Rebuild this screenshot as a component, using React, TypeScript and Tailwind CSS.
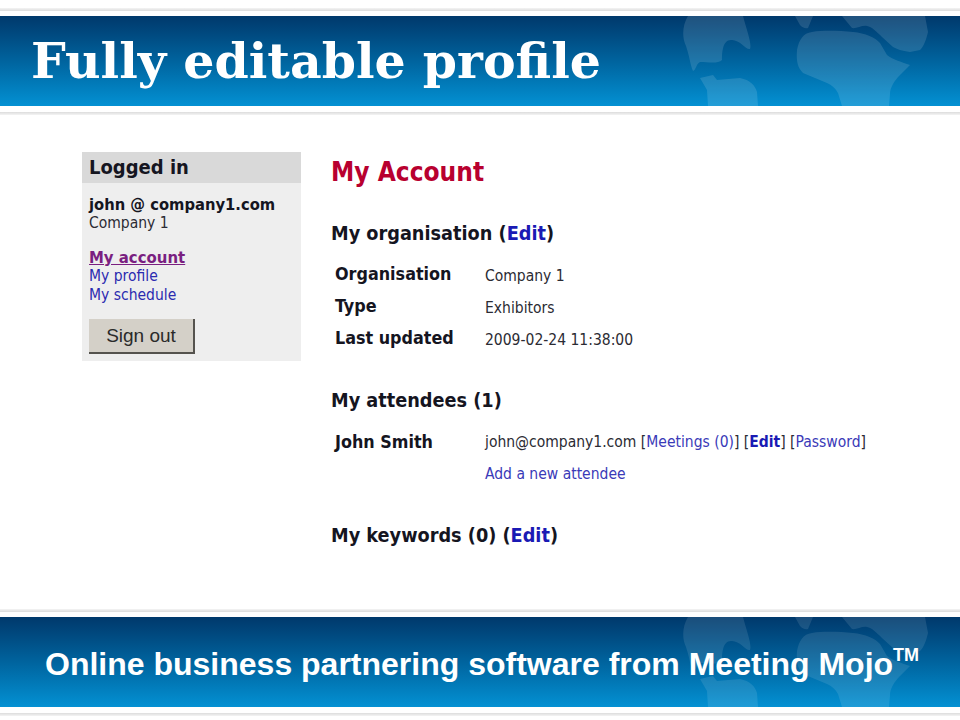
import React from 'react';

const tahoma = "font-['DejaVu_Sans_Condensed','DejaVu_Sans',sans-serif]";

const WorldMap: React.FC<{ className: string }> = ({ className }) => (
    <svg viewBox="0 0 360 90" className={className} fill="#ffffff">
        <path d="M88 0 L143 0 C147 15 152 28 150 33 C146 34 140 24 132 24 C123 23 122 35 122 44 C118 48 108 46 100 46 C96 48 96 54 93 55 C90 48 90 42 86 30 C82 22 82 10 88 0Z" />
        <path d="M100 62 L113 59 L117 64 L140 62 C150 64 155 69 157 76 L158 90 L108 90 L107 74 Z" />
        <path d="M197 34 C199 24 203 17 212 16 C225 14 240 15 253 16 C265 17 276 22 280 27 L287 39 C293 44 302 46 310 49 L300 59 C294 65 290 72 290 78 L289 90 L242 90 L238 77 C235 72 232 69 227 67 L203 57 C198 52 196 46 197 34 Z" />
        <path d="M242 0 L325 0 L328 16 C326 24 324 30 320 34 L310 36 C302 35 297 33 293 31 L282 21 C276 15 272 11 267 10 C262 9 256 13 252 12 Z" />
        <path d="M195 0 L213 0 L208 12 C205 13 202 11 200 9 Z" />
    </svg>
);

const Band: React.FC<{ mapClass: string; children: React.ReactNode }> = ({ mapClass, children }) => (
    <div>
        <div className="h-[3px] bg-gradient-to-b from-[#f4f4f4] to-[#dcdcdc]" />
        <div className="h-[5px] bg-white" />
        <div className="relative h-[90px] overflow-hidden bg-gradient-to-b from-[#00396c] to-[#0491d3]">
            <WorldMap className={mapClass} />
            {children}
        </div>
        <div className="h-[6px] bg-white" />
        <div className="h-[3px] bg-gradient-to-b from-[#dcdcdc] to-[#f4f4f4]" />
    </div>
);

const Row: React.FC<{ label: string; valueClass?: string; children: React.ReactNode }> = ({ label, valueClass = 'pt-[5px]', children }) => (
    <div className="flex h-[32px] items-center pl-1">
        <div className="w-[150px] text-[17.8px] font-bold text-[#15151f]">{label}</div>
        <div className={`text-[15.5px] text-[#2b2b33] ${valueClass}`}>{children}</div>
    </div>
);

const Heading: React.FC<{ children: React.ReactNode }> = ({ children }) => (
    <h2 className="text-[19.7px] leading-[24px] font-bold text-[#15151f]">{children}</h2>
);

const App: React.FC = () => {
    return (
        <div className="flex h-[720px] w-[960px] flex-col overflow-hidden bg-white">
            <div className="pt-[8px]">
                <Band mapClass="absolute top-0 right-0 h-[90px] w-[360px] opacity-[0.12]">
                    <h1 className="pl-[31px] pt-[13px] font-['DejaVu_Serif',serif] text-[49px] leading-[64px] font-bold text-white">
                        Fully editable profile
                    </h1>
                </Band>
            </div>

            <main className={`flex flex-1 pl-[82px] pt-[37px] ${tahoma}`}>
                <aside className="h-[209px] w-[219px] bg-[#eeeeee]">
                    <div className="h-[31px] bg-[#d9d9d9] pl-[7px] text-[20px] leading-[31px] font-bold text-[#15151f]">Logged in</div>
                    <div className="px-[7px] pt-[12px] text-[15.5px] leading-[19px]">
                        <div className="text-[16.4px] font-bold text-[#15151f]">john @ company1.com</div>
                        <div className="text-[#2b2b33]">Company 1</div>
                        <div className="mt-[15px] text-[16.6px] font-bold text-[#7a1f80] underline">My account</div>
                        <div className="text-[#2b2bb0]">My profile</div>
                        <div className="text-[#2b2bb0]">My schedule</div>
                        <button className="mt-[14px] h-[35px] w-[106px] border-r-2 border-b-2 border-[#55534e] bg-[#d4d0c8] font-['Liberation_Sans',sans-serif] text-[19px] text-[#2a2a2a]">
                            Sign out
                        </button>
                    </div>
                </aside>

                <div className="ml-[30px] flex-1">
                    <div className="pt-[1px] text-[26px] leading-[38px] font-bold text-[#b8002f]">My Account</div>
                    <div className="mt-[31px]">
                        <Heading>My organisation (<span className="text-[#1a1ab4]">Edit</span>)</Heading>
                    </div>
                    <div className="mt-[12px]">
                        <Row label="Organisation">Company 1</Row>
                        <Row label="Type">Exhibitors</Row>
                        <Row label="Last updated">2009-02-24 11:38:00</Row>
                    </div>
                    <div className="mt-[35px]">
                        <Heading>My attendees (1)</Heading>
                    </div>
                    <div className="mt-[13px]">
                        <Row label="John Smith" valueClass="pt-[2px]">
                            john@company1.com [<span className="text-[#3a3ab8]">Meetings (0)</span>] [<span className="font-bold text-[#1a1ab4]">Edit</span>] [<span className="text-[#3a3ab8]">Password</span>]
                        </Row>
                        <Row label="" valueClass="pt-[2px]"><span className="text-[#3a3ab8]">Add a new attendee</span></Row>
                    </div>
                    <div className="mt-[34px]">
                        <Heading>My keywords (0) (<span className="text-[#1a1ab4]">Edit</span>)</Heading>
                    </div>
                </div>
            </main>

            <div className="pb-[4px]">
                <Band mapClass="absolute top-0 right-0 h-[90px] w-[360px] opacity-[0.1]">
                    <div className="relative flex h-[90px] items-center pl-[45px] pt-[4px] font-['Liberation_Sans',sans-serif] text-[32px] font-bold whitespace-nowrap text-white">
                        Online business partnering software from Meeting Mojo
                        <sup className="text-[18px]">TM</sup>
                    </div>
                </Band>
            </div>
        </div>
    );
};

export default App;
